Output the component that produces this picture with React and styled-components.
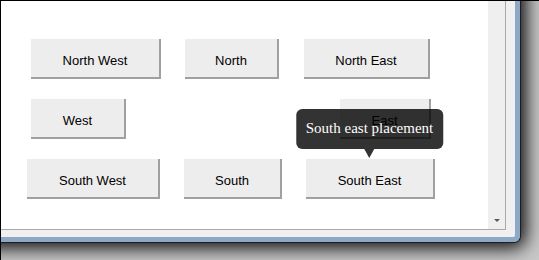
import React from 'react'
import styled, { createGlobalStyle } from 'styled-components'

const Global = createGlobalStyle`
  html, body {
    margin: 0;
    padding: 0;
    background: #c8c8c8;
  }
`

const Screen = styled.div`
  box-sizing: border-box;
  width: 539px;
  height: 260px;
  border-top: 1px solid #000;
  border-left: 1px solid #000;
  background: #c8c8c8;
  overflow: hidden;
`

// window runs off the top-left edge of the capture
const Window = styled.div`
  box-sizing: border-box;
  width: 539px;
  height: 261px;
  margin: -20px 0 0 -20px;
  display: flex;
  border-right: 5px solid #8ea8c8;
  border-bottom: 5px solid #8ea8c8;
  border-radius: 0 0 6px 0;
  box-shadow: 0 0 0 1px #1e1e1e, 0 0 18px 6px rgba(0, 0, 0, 0.95);
`

const Frame = styled.div`
  flex: 1;
  display: flex;
  background: #f0f0f0;
  padding: 0 9px 7px 0;
  border-radius: 0 0 3px 0;
`

const Client = styled.div`
  flex: 1;
  display: flex;
  border-right: 1px solid #a9a9a9;
  border-bottom: 1px solid #a9a9a9;
`

const Content = styled.div`
  flex: 1;
  position: relative;
  display: flex;
  flex-direction: column;
  gap: 20px;
  padding: 58px 0 0 20px;
  background: #fff;
`

const Scrollbar = styled.div`
  width: 17px;
  display: flex;
  flex-direction: column;
  justify-content: flex-end;
  background: #efefef;
`

const ArrowButton = styled.div`
  height: 17px;
  display: flex;
  align-items: center;
  justify-content: center;

  &::after {
    content: '';
    border-left: 3px solid transparent;
    border-right: 3px solid transparent;
    border-top: 3px solid #5a5a5a;
    margin-left: 1px;
  }
`

const Row = styled.div`
  display: flex;
  height: 40px;
`

const Button = styled.button`
  position: relative;
  box-sizing: border-box;
  width: ${p => p.$w}px;
  height: 40px;
  margin: 0 0 0 ${p => p.$left}px;
  padding: 4px 0 0;
  background: #ededed;
  border: none;
  border-right: 2px solid #a0a0a0;
  border-bottom: 2px solid #a0a0a0;
  border-radius: 0;
  font-family: "Liberation Sans", Arial, sans-serif;
  font-size: 13px;
  color: #000;
  z-index: ${p => (p.$tip ? 2 : 0)};
`

const Tooltip = styled.div`
  position: absolute;
  left: 50%;
  bottom: calc(100% + 10px);
  transform: translateX(-50%);
  height: 40px;
  padding: 0 10px;
  box-sizing: border-box;
  white-space: nowrap;
  line-height: 38px;
  background: rgba(0, 0, 0, 0.8);
  border-radius: 6px;
  color: #fff;
  font-family: "Liberation Serif", "Times New Roman", serif;
  font-size: 15px;

  &::after {
    content: '';
    position: absolute;
    top: 100%;
    left: 50%;
    margin-left: -5px;
    border-left: 5px solid transparent;
    border-right: 5px solid transparent;
    border-top: 9px solid rgba(0, 0, 0, 0.8);
  }
`

const rows = [
  [
    { label: 'North West', w: 130, left: 30 },
    { label: 'North', w: 94, left: 24 },
    { label: 'North East', w: 126, left: 25 },
  ],
  [
    { label: 'West', w: 95, left: 30 },
    { label: 'East', w: 91, left: 214 },
  ],
  [
    { label: 'South West', w: 133, left: 26 },
    { label: 'South', w: 98, left: 24 },
    { label: 'South East', w: 129, left: 24, tip: 'South east placement' },
  ],
]

const App = () => (
  <>
    <Global />
    <Screen>
      <Window>
        <Frame>
          <Client>
            <Content>
              {rows.map((row, i) => (
                <Row key={i}>
                  {row.map(b => (
                    <Button key={b.label} $w={b.w} $left={b.left} $tip={!!b.tip}>
                      {b.label}
                      {b.tip && <Tooltip>{b.tip}</Tooltip>}
                    </Button>
                  ))}
                </Row>
              ))}
            </Content>
            <Scrollbar>
              <ArrowButton />
            </Scrollbar>
          </Client>
        </Frame>
      </Window>
    </Screen>
  </>
)

export default App
